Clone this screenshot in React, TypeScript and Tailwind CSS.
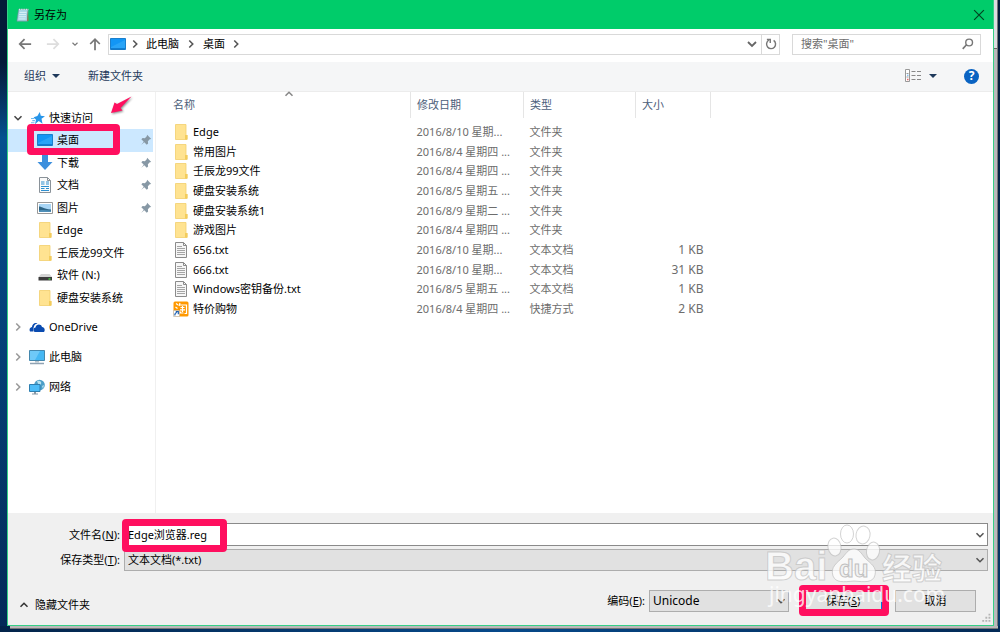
import { useState } from 'react';
import type { ReactNode } from 'react';
import clsx from 'clsx';

type IconName = 'folder' | 'text' | 'taobao' | 'desktop' | 'download' | 'document' | 'picture' | 'drive';

type FileRow = { icon: IconName; name: string; date: string; kind: string; size?: string };

const FILES: FileRow[] = [
    { icon: 'folder', name: 'Edge', date: '2016/8/10 星期...', kind: '文件夹' },
    { icon: 'folder', name: '常用图片', date: '2016/8/4 星期四 ...', kind: '文件夹' },
    { icon: 'folder', name: '壬辰龙99文件', date: '2016/8/4 星期四 ...', kind: '文件夹' },
    { icon: 'folder', name: '硬盘安装系统', date: '2016/8/5 星期五 ...', kind: '文件夹' },
    { icon: 'folder', name: '硬盘安装系统1', date: '2016/8/9 星期二 ...', kind: '文件夹' },
    { icon: 'folder', name: '游戏图片', date: '2016/8/4 星期四 ...', kind: '文件夹' },
    { icon: 'text', name: '656.txt', date: '2016/8/10 星期...', kind: '文本文档', size: '1 KB' },
    { icon: 'text', name: '666.txt', date: '2016/8/10 星期...', kind: '文本文档', size: '31 KB' },
    { icon: 'text', name: 'Windows密钥备份.txt', date: '2016/8/5 星期五 ...', kind: '文本文档', size: '1 KB' },
    { icon: 'taobao', name: '特价购物', date: '2016/8/4 星期四 ...', kind: '快捷方式', size: '2 KB' },
];

const QUICK: { icon: IconName; name: string; pinned?: boolean }[] = [
    { icon: 'desktop', name: '桌面', pinned: true },
    { icon: 'download', name: '下载', pinned: true },
    { icon: 'document', name: '文档', pinned: true },
    { icon: 'picture', name: '图片', pinned: true },
    { icon: 'folder', name: 'Edge' },
    { icon: 'folder', name: '壬辰龙99文件' },
    { icon: 'drive', name: '软件 (N:)' },
    { icon: 'folder', name: '硬盘安装系统' },
];

function Svg({ children, className = 'size-4' }: { children: ReactNode; className?: string }) {
    return (
        <svg viewBox="0 0 16 16" fill="none" className={clsx('shrink-0', className)} aria-hidden="true">
            {children}
        </svg>
    );
}

const CHEVRONS = { down: 'M4 6l4 4 4-4', up: 'M4 10l4-4 4 4', right: 'M6 4l4 4-4 4' };

function Chevron({ dir, className = 'size-3.5 text-[#555]' }: { dir: keyof typeof CHEVRONS; className?: string }) {
    return (
        <Svg className={className}>
            <path d={CHEVRONS[dir]} stroke="currentColor" strokeWidth="1.8" />
        </Svg>
    );
}

function Triangle() {
    return (
        <Svg className="size-2">
            <path d="M0 4h16l-8 8z" fill="#1e395b" />
        </Svg>
    );
}

function ItemIcon({ name }: { name: IconName }) {
    switch (name) {
        case 'folder':
            return (
                <Svg>
                    <path d="M2.500.5h10.500v10l1 1v4H2.500z" fill="#ffe391" stroke="#f2cf6c" strokeWidth=".8" />
                    <path d="M12 11h2.500v4.500H12z" fill="#f3cc5c" />
                </Svg>
            );
        case 'text':
            return (
                <Svg>
                    <path d="M2.5.5h8l3 3v12h-11z" fill="#f6f6f6" stroke="#8b8b8b" />
                    <path d="M10.5.5v3h3" stroke="#8b8b8b" />
                    <path d="M4 4.5h5M4 6.5h8M4 8.5h8M4 10.5h8M4 12.5h8" stroke="#a5a5a5" />
                </Svg>
            );
        case 'taobao':
            return (
                <Svg>
                    <rect x=".5" y=".5" width="15" height="15" rx="1.5" fill="#f90" />
                    <path
                        d="M3 2.5l2 1.5M2.5 6l2 1.5M7 2L6 5M6 4h7.5v8.5h-2M7.5 6.5h4M7 8.8h5M9.5 5v6M7.5 10.5v1.5h3"
                        stroke="#fff"
                        strokeWidth="1.2"
                    />
                    <path d="M.5 9.5h6v6h-6z" fill="#fff" stroke="#aaa" strokeWidth=".5" />
                    <path d="M1.8 14.5c0-2 .7-3 2.3-3M2.8 10.5h2.5v2.8" stroke="#1c5fb0" strokeWidth="1.2" />
                </Svg>
            );
        case 'desktop':
            return (
                <Svg>
                    <path d="M.5 2.5h15v11H.5z" fill="#1296f5" stroke="#1a7fcc" />
                    <path d="M1 11L15 4v8H1z" fill="#38aef9" opacity=".6" />
                    <path d="M1 12.8h14" stroke="#0f6cb5" strokeWidth=".8" />
                </Svg>
            );
        case 'download':
            return (
                <Svg>
                    <path d="M5 0h6v7h4.5L8 15 .5 7H5z" fill="#3c8fdd" />
                </Svg>
            );
        case 'document':
            return (
                <Svg>
                    <path d="M2.5.5h8l3 3v12h-11z" fill="#fafafa" stroke="#8a9299" />
                    <path d="M10.5.5v3h3" stroke="#8a9299" />
                    <path d="M4 5h3.5M9 5h3M4 7h3.5M9 7h3M4 9.5h8M4 11.5h3.5M9 11.5h3M4 13.5h8" stroke="#2e8fd0" />
                </Svg>
            );
        case 'picture':
            return (
                <Svg>
                    <path d="M.5 2.5h15v11H.5z" fill="#fff" stroke="#999" />
                    <path d="M2 4h12v8H2z" fill="#a8d5f5" />
                    <path d="M2 6.5c3 0 4 2.5 12 3V12H2z" fill="#2d6486" />
                    <path d="M2 10.5c4-1 8 0 12 0V12H2z" fill="#4f8fb8" />
                </Svg>
            );
        case 'drive':
            return (
                <Svg>
                    <path d="M4 7h8.500l2.500 3H1.500z" fill="#d4d4d4" />
                    <path d="M1.500 10H15v3.500H1.500z" fill="#3c3c3c" />
                    <path d="M11.5 12h2" stroke="#3ed63e" strokeWidth="1.4" />
                </Svg>
            );
    }
}

function Pin() {
    return (
        <Svg className="size-3">
            <path d="M9.5 1L15 6.5l-2 .5-2.5 2.5.3 3L9 14.3 5.7 11 1.5 14.5 5 10.2 1.8 7 3.5 5.2l3 .3L9 3z" fill="#8798a5" />
        </Svg>
    );
}

// Marker frame drawn over whatever it sits in
function Marker({ className }: { className: string }) {
    return (
        <span className={clsx('absolute z-10 rounded-[4px] border-[7px] border-[#ff0f5f] pointer-events-none', className)} />
    );
}

function TreeRow({ label, icon }: { label: string; icon: ReactNode }) {
    return (
        <li className="flex h-[30px] items-center pl-[3px]">
            <button aria-label={`展开 ${label}`}>
                <Chevron dir="right" className="size-3.5 text-[#999]" />
            </button>
            <span className="mx-1 flex">{icon}</span>
            {label}
        </li>
    );
}

function NavPane({ selected, onSelect }: { selected: string; onSelect: (name: string) => void }) {
    return (
        <nav className="relative w-[148px] shrink-0 border-r border-[#f0f0f0] pt-3.5">
            <div className="flex h-[23px] items-center pl-[3px]">
                <button aria-label="折叠 快速访问">
                    <Chevron dir="down" className="size-3.5 text-[#444]" />
                </button>
                <Svg className="ml-1.5 mr-1 size-3.5">
                    <path d="M10 1l1.2 4.5 4.8.4-4 3 1.2 5.6-4.4-3L4.5 15l1.2-5L3 7.2l4.3-1.4z" fill="#2795e9" />
                    <path d="M0 8.5h4M1.5 11h3M0 13.5h4" stroke="#6db9ef" strokeWidth="1.2" />
                </Svg>
                快速访问
            </div>
            <ul className="mr-0.5 grid h-[180px] auto-rows-fr">
                {QUICK.map(item => (
                    <li key={item.name} className={clsx('relative flex', selected === item.name && 'bg-[#cce8ff]')}>
                        <button
                            onClick={() => onSelect(item.name)}
                            className="flex flex-1 items-center gap-1 pl-[29px] pr-px text-left"
                        >
                            <ItemIcon name={item.icon} />
                            <span className="flex-1 whitespace-nowrap">{item.name}</span>
                            {item.pinned && <Pin />}
                        </button>
                        {item.name === '桌面' && <Marker className="-top-[5px] left-[19px] h-[31px] w-[93px]" />}
                    </li>
                ))}
            </ul>
            <ul className="pt-[3px]">
                <TreeRow
                    label="OneDrive"
                    icon={
                        <Svg>
                            <path d="M1 12.5C-.5 9.5 2 8 3 8c0-3 3-5 5.500-3.500-3 .5-4.500 3-4 8z" fill="#0a4bb0" />
                            <path d="M5.500 13C3.500 10.500 5 8.500 6.500 8.500c.5-3.500 5.500-4 6.500-.5 2.500 0 3.500 3 2 5z" fill="#0a4bb0" />
                        </Svg>
                    }
                />
                <TreeRow
                    label="此电脑"
                    icon={
                        <Svg>
                            <path d="M.5 1.500h15v10H.5z" fill="#45b7f3" stroke="#4487ad" />
                            <path d="M1 2h10L6 11H1z" fill="#8bd6fb" opacity=".6" />
                            <path d="M6 12h4v1.500H6z" fill="#b9c4cc" />
                            <path d="M1 14.500h14" stroke="#8fa2b3" strokeWidth="1.500" />
                        </Svg>
                    }
                />
                <TreeRow
                    label="网络"
                    icon={
                        <Svg>
                            <circle cx="10.500" cy="6" r="5.300" fill="#4c9fc8" />
                            <path d="M8 2c3-1 5 1 4 3s-3 1-4-3zM13 7l2-1-1 4z" fill="#b5e0ef" />
                            <path d="M.5 5.500h10.500v7H.5z" fill="#4cbcf7" stroke="#2e7fb0" />
                            <path d="M5 13h2v1.500H5zM3 14.500h6v1H3z" fill="#8798a5" />
                        </Svg>
                    }
                />
            </ul>
            <svg viewBox="0 0 24 20" className="absolute left-[102px] top-1 h-5 w-6 drop-shadow-[1px_1px_1px_#888]" aria-hidden="true">
                <path d="M21.500.5L7 8 4.500 6.500 1 17l11.500-2.500-2-2.500z" fill="#ff0f5f" />
            </svg>
        </nav>
    );
}

function FileTable() {
    const head = 'h-[26px] border-r border-[#e5e5e5] pl-1.5 text-left font-normal text-[#4c607a]';
    return (
        <div className="relative min-w-0 flex-1">
            <Chevron dir="up" className="absolute left-[126px] top-[-5px] size-3.5 text-[#888]" />
            <table className="h-[227px] w-[555px] table-fixed">
                <thead>
                    <tr>
                        <th className="h-[26px] border-r border-[#e5e5e5] pl-[17px] text-left font-normal text-[#4c607a]">名称</th>
                        <th className={clsx(head, 'w-[113px]')}>修改日期</th>
                        <th className={clsx(head, 'w-[112px]')}>类型</th>
                        <th className={clsx(head, 'w-[75px]')}>大小</th>
                    </tr>
                    <tr aria-hidden="true">
                        <td className="h-1" colSpan={4} />
                    </tr>
                </thead>
                <tbody className="text-[#6d6d6d]">
                    {FILES.map(file => (
                        <tr key={file.name}>
                            <td className="pl-[17px] text-black">
                                <span className="flex items-center gap-1">
                                    <ItemIcon name={file.icon} />
                                    {file.name}
                                </span>
                            </td>
                            <td className="whitespace-nowrap pl-1.5">{file.date}</td>
                            <td className="pl-1.5">{file.kind}</td>
                            <td className="pr-[7px] text-right text-xs">{file.size}</td>
                        </tr>
                    ))}
                </tbody>
            </table>
        </div>
    );
}

function AddressBar() {
    return (
        <div className="flex h-[33px] items-center pb-[3px] pl-2.5 pr-3 text-[#555]">
            <button aria-label="后退">
                <Svg className="size-3.5">
                    <path d="M15 8H2.500M7.500 2.500L2 8l5.500 5.500" stroke="#777" strokeWidth="2" />
                </Svg>
            </button>
            <button aria-label="前进" disabled className="ml-3.5">
                <Svg className="size-3.5">
                    <path d="M1 8h12.500M8.500 2.500L14 8l-5.500 5.500" stroke="#ddd" strokeWidth="2" />
                </Svg>
            </button>
            <button aria-label="最近的位置" className="ml-2.5">
                <Chevron dir="down" className="size-2.5 text-[#777]" />
            </button>
            <button aria-label="上移" className="ml-2">
                <Svg className="size-3.5">
                    <path d="M8 15V2.500M2.500 8L8 2.500 13.500 8" stroke="#777" strokeWidth="2" />
                </Svg>
            </button>
            <div className="ml-1.5 flex h-[21px] flex-1 items-center border border-[#d9d9d9] pl-px text-black">
                <ItemIcon name="desktop" />
                <Chevron dir="right" className="ml-0.5 size-3.5 text-[#555]" />
                <button className="ml-1">此电脑</button>
                <Chevron dir="right" className="mx-[5px] size-3.5 text-[#555]" />
                <button>桌面</button>
                <Chevron dir="right" className="ml-1 size-3.5 text-[#555]" />
                <button aria-label="以前的位置" className="ml-auto mr-px">
                    <Chevron dir="down" className="size-4 text-[#666]" />
                </button>
                <button aria-label="刷新" className="flex h-full w-[18px] items-center justify-center border-l border-[#d9d9d9]">
                    <Svg className="size-3">
                        <path d="M11.500 3.200A6 6 0 1 1 5 3M2.500 2H7v4.500" stroke="#777" strokeWidth="1.900" />
                    </Svg>
                </button>
            </div>
            <div className="ml-3 flex h-[21px] w-[189px] items-center border border-[#d9d9d9] pl-2 pr-1.5">
                <input
                    aria-label="搜索"
                    placeholder={'搜索"桌面"'}
                    className="min-w-0 flex-1 outline-none placeholder:text-[#6d6d6d]"
                />
                <Svg className="size-3">
                    <circle cx="9.500" cy="6" r="4.500" stroke="#777" strokeWidth="1.900" />
                    <path d="M6 9l-5 5.500" stroke="#777" strokeWidth="2.200" />
                </Svg>
            </div>
        </div>
    );
}

function Toolbar() {
    return (
        <div className="flex h-[30px] items-center border-b border-[#ececec] bg-[#f5f6f7] pb-px pl-4 pr-3.5 text-[#1e395b]">
            <button className="flex items-center gap-1.5">
                组织
                <Triangle />
            </button>
            <button className="ml-7">新建文件夹</button>
            <button aria-label="更改视图" className="ml-auto flex items-center gap-2">
                <Svg>
                    <path d="M.5 1.500h4v12h-4z" fill="#fff" stroke="#999" />
                    <path d="M1.500 5.500h2M1.500 9h2" stroke="#999" />
                    <path d="M2 11.500h1.500" stroke="#e66" strokeWidth="1.500" />
                    <path d="M2 7.200h1.500" stroke="#5ae" />
                    <path d="M6.500 3.500h4M12 3.500h4M6.500 7.500h4M12 7.500h4M6.500 11.500h4M12 11.500h4" stroke="#888" />
                </Svg>
                <Triangle />
            </button>
            <button
                aria-label="帮助"
                className="ml-[27px] flex size-[15px] items-center justify-center rounded-full bg-[#0a63c2] text-xs font-bold text-white"
            >
                ?
            </button>
        </div>
    );
}

function Select({ id, options, className }: { id: string; options: string[]; className?: string }) {
    return (
        <span className={clsx('relative flex', className)}>
            <select id={id} className="h-[22px] w-full appearance-none border border-[#adadad] bg-[#e1e1e1] pl-[3px]">
                {options.map(o => (
                    <option key={o}>{o}</option>
                ))}
            </select>
            <Chevron dir="down" className="pointer-events-none absolute right-px top-1 size-3.5 text-[#555]" />
        </span>
    );
}

function Watermark() {
    return (
        <svg
            viewBox="0 0 180 90"
            className="pointer-events-none absolute bottom-[13px] right-[46px] z-20 h-[90px] w-[180px]"
            aria-hidden="true"
        >
            <g fill="#fff" fillOpacity=".75" stroke="#b5b5b5" strokeOpacity=".6">
                <ellipse cx="80" cy="12" rx="6.500" ry="9" />
                <ellipse cx="96" cy="13" rx="7" ry="9" transform="rotate(10 96 13)" />
                <ellipse cx="67.500" cy="25" rx="6.500" ry="9" transform="rotate(-10 67.500 25)" />
                <ellipse cx="106" cy="29" rx="6.500" ry="9" transform="rotate(10 106 29)" />
                <path d="M87 27c5 0 7 4 11 9 6 6 12 9 10 17-2 8-10 7-21 6-11 1-18 2-21-5-3-9 4-13 10-19 4-5 6-8 11-8z" />
                <text x="-2" y="58" fontSize="40" fontWeight="700" fontFamily="Liberation Sans, sans-serif">
                    Bai
                </text>
                <text x="115" y="57" fontSize="30" fontWeight="700" fontFamily="Noto Sans CJK SC, sans-serif">
                    经验
                </text>
            </g>
            <text
                x="72"
                y="55"
                fontSize="24"
                fontWeight="700"
                fontFamily="Liberation Sans, sans-serif"
                fill="#f2f2f2"
                stroke="#c0c0c0"
            >
                du
            </text>
            <text x="2" y="80" fontSize="21" fontFamily="Noto Sans, sans-serif" fill="#fff" fillOpacity=".8">
                jingyanbaidu.com
            </text>
        </svg>
    );
}

function SaveForm() {
    const [fileName, setFileName] = useState('Edge浏览器.reg');
    return (
        <form className="relative bg-[#f0f0f0] pb-2 pl-3 pr-[5px] pt-2.5" onSubmit={e => e.preventDefault()}>
            <div className="grid grid-cols-[100px_1fr] items-center gap-x-1 gap-y-[3px]">
                <label htmlFor="file-name" className="text-right">
                    文件名(<u>N</u>):
                </label>
                <div className="relative flex h-[23px] border border-[#8a8a8a] bg-white">
                    <input
                        id="file-name"
                        value={fileName}
                        onChange={e => setFileName(e.target.value)}
                        className="min-w-0 flex-1 pl-[3px] outline-none"
                    />
                    <button type="button" aria-label="文件名列表">
                        <Chevron dir="down" />
                    </button>
                    <Marker className="-left-[3px] -top-[5px] h-[33px] w-[105px]" />
                </div>
                <label htmlFor="file-type" className="text-right">
                    保存类型(<u>T</u>):
                </label>
                <Select id="file-type" options={['文本文档(*.txt)']} />
            </div>
            <div className="mt-[19px] flex h-[27px] items-start pr-3">
                <button type="button" className="mr-auto flex items-center gap-1 self-end py-1">
                    <Chevron dir="up" className="-ml-[3px] size-3.5 text-[#333]" />
                    隐藏文件夹
                </button>
                <label htmlFor="encoding" className="mr-1 leading-[22px]">
                    编码(<u>E</u>):
                </label>
                <Select id="encoding" options={['Unicode']} className="w-[140px] text-xs" />
                <div className="relative ml-3.5">
                    <button type="submit" className="h-[22px] w-20 border-2 border-[#0078d7] bg-[#e1e1e1]">
                        保存(<u>S</u>)
                    </button>
                    <Marker className="-left-1 -top-[5px] h-[31px] w-[90px]" />
                </div>
                <button type="button" className="ml-3 h-[22px] w-[81px] border border-[#adadad] bg-[#e1e1e1]">
                    取消
                </button>
            </div>
            <Svg className="absolute bottom-0.5 right-0.5 size-2.5">
                <path
                    d="M12 1h3v3h-3zM7 6h3v3H7zM12 6h3v3h-3zM2 11h3v3H2zM7 11h3v3H7zM12 11h3v3h-3z"
                    fill="#b5b5b5"
                />
            </Svg>
            <Watermark />
        </form>
    );
}

export default function App() {
    const [selected, setSelected] = useState('桌面');

    return (
        <div className="flex min-h-screen flex-col bg-[#06396b] text-[11px] leading-4 text-black [font-family:'Noto_Sans','Noto_Sans_CJK_SC',sans-serif]">
            <div className="flex flex-1">
                <div className="w-[7px] bg-linear-to-b from-[#031a38] from-10% via-[#05508f] via-22% to-[#042a58]" />
                <main className="flex min-w-0 flex-1 flex-col border-x border-b border-[#35cf85] bg-white">
                    <header className="flex h-[29px] items-center bg-[#00cc6a] px-2">
                        <Svg className="size-3.5">
                            <path d="M3 1.500h11l-1 13.500H1z" fill="#a5d6e4" stroke="#678c99" strokeWidth=".7" />
                            <path d="M13.500 2l1 12.500-2 .5z" fill="#8d7b55" />
                            <path d="M4 5h8M3.500 7.500h8M3.500 10h8M3 12.500h8" stroke="#e2f5f9" />
                            <path d="M3.500 1.500h10.500" stroke="#eee" strokeWidth="1.500" strokeDasharray="1 1" />
                        </Svg>
                        <h1 className="ml-1">另存为</h1>
                        <button aria-label="关闭" className="ml-auto">
                            <Svg className="size-3">
                                <path d="M1.500 1.500l13 13M14.500 1.500l-13 13" stroke="#042" strokeWidth="1.600" />
                            </Svg>
                        </button>
                    </header>
                    <AddressBar />
                    <Toolbar />
                    <div className="flex flex-1">
                        <NavPane selected={selected} onSelect={setSelected} />
                        <FileTable />
                    </div>
                    <SaveForm />
                </main>
                {/* Edge of the window lying behind this one */}
                <div className="flex w-1 flex-col border-r border-[#777] bg-[#b9b9bb]">
                    <div className="h-[49px] border-b border-[#666] bg-[#dcdce0]" />
                </div>
                <div className="w-0.5 bg-linear-to-b from-[#031a38] to-[#06396b]" />
            </div>
            <div className="h-1.5 bg-linear-to-r from-[#03244a] via-[#06498a] to-[#032a56] pl-2.5 pr-0.5">
                <div className="h-[3px] border-b border-[#777] bg-[#b9b9bb]" />
            </div>
        </div>
    );
}
